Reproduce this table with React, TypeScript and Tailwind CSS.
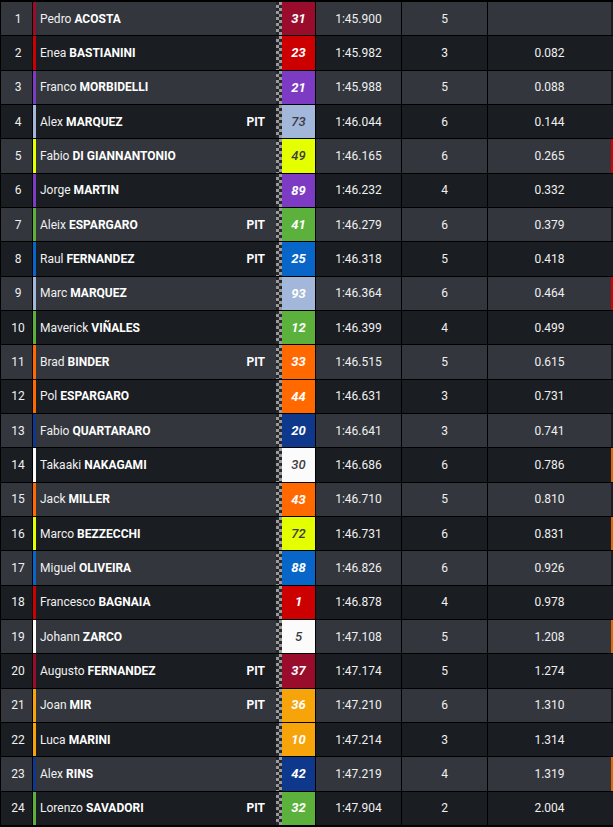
import React from "react";

type Row = {
  pos: number;
  first: string;
  last: string;
  pit?: boolean;
  num: string;
  color: string;
  dark?: boolean;
  time: string;
  laps: string;
  gap: string;
  edge?: string;
};

const MAROON = "bg-[#990c2c]";
const RED = "bg-[#cc0000]";
const PURPLE = "bg-[#7d3bc3]";
const LBLUE = "bg-[#a2b7d9]";
const LIME = "bg-[#e3ff00]";
const GREEN = "bg-[#5bb13c]";
const BLUE = "bg-[#0866c9]";
const ORANGE = "bg-[#ff6900]";
const DBLUE = "bg-[#0e388b]";
const WHITE = "bg-[#fbfbfb]";
const GOLD = "bg-[#f7a30a]";

const rows: Row[] = [
  { pos: 1, first: "Pedro", last: "ACOSTA", num: "31", color: MAROON, time: "1:45.900", laps: "5", gap: "" },
  { pos: 2, first: "Enea", last: "BASTIANINI", num: "23", color: RED, time: "1:45.982", laps: "3", gap: "0.082" },
  { pos: 3, first: "Franco", last: "MORBIDELLI", num: "21", color: PURPLE, time: "1:45.988", laps: "5", gap: "0.088" },
  { pos: 4, first: "Alex", last: "MARQUEZ", pit: true, num: "73", color: LBLUE, dark: true, time: "1:46.044", laps: "6", gap: "0.144" },
  { pos: 5, first: "Fabio", last: "DI GIANNANTONIO", num: "49", color: LIME, dark: true, time: "1:46.165", laps: "6", gap: "0.265", edge: "bg-[#d60000]" },
  { pos: 6, first: "Jorge", last: "MARTIN", num: "89", color: PURPLE, time: "1:46.232", laps: "4", gap: "0.332" },
  { pos: 7, first: "Aleix", last: "ESPARGARO", pit: true, num: "41", color: GREEN, time: "1:46.279", laps: "6", gap: "0.379" },
  { pos: 8, first: "Raul", last: "FERNANDEZ", pit: true, num: "25", color: BLUE, time: "1:46.318", laps: "5", gap: "0.418" },
  { pos: 9, first: "Marc", last: "MARQUEZ", num: "93", color: LBLUE, time: "1:46.364", laps: "6", gap: "0.464", edge: "bg-[#d60000]" },
  { pos: 10, first: "Maverick", last: "VIÑALES", num: "12", color: GREEN, time: "1:46.399", laps: "4", gap: "0.499" },
  { pos: 11, first: "Brad", last: "BINDER", pit: true, num: "33", color: ORANGE, time: "1:46.515", laps: "5", gap: "0.615" },
  { pos: 12, first: "Pol", last: "ESPARGARO", num: "44", color: ORANGE, time: "1:46.631", laps: "3", gap: "0.731" },
  { pos: 13, first: "Fabio", last: "QUARTARARO", num: "20", color: DBLUE, time: "1:46.641", laps: "3", gap: "0.741" },
  { pos: 14, first: "Takaaki", last: "NAKAGAMI", num: "30", color: WHITE, dark: true, time: "1:46.686", laps: "6", gap: "0.786", edge: "bg-[#e06a00]" },
  { pos: 15, first: "Jack", last: "MILLER", num: "43", color: ORANGE, time: "1:46.710", laps: "5", gap: "0.810" },
  { pos: 16, first: "Marco", last: "BEZZECCHI", num: "72", color: LIME, dark: true, time: "1:46.731", laps: "6", gap: "0.831", edge: "bg-[#e06a00]" },
  { pos: 17, first: "Miguel", last: "OLIVEIRA", num: "88", color: BLUE, time: "1:46.826", laps: "6", gap: "0.926" },
  { pos: 18, first: "Francesco", last: "BAGNAIA", num: "1", color: RED, time: "1:46.878", laps: "4", gap: "0.978" },
  { pos: 19, first: "Johann", last: "ZARCO", num: "5", color: WHITE, dark: true, time: "1:47.108", laps: "5", gap: "1.208", edge: "bg-[#e06a00]" },
  { pos: 20, first: "Augusto", last: "FERNANDEZ", pit: true, num: "37", color: MAROON, time: "1:47.174", laps: "5", gap: "1.274" },
  { pos: 21, first: "Joan", last: "MIR", pit: true, num: "36", color: GOLD, time: "1:47.210", laps: "6", gap: "1.310" },
  { pos: 22, first: "Luca", last: "MARINI", num: "10", color: GOLD, time: "1:47.214", laps: "3", gap: "1.314" },
  { pos: 23, first: "Alex", last: "RINS", num: "42", color: DBLUE, time: "1:47.219", laps: "4", gap: "1.319", edge: "bg-[#e06a00]" },
  { pos: 24, first: "Lorenzo", last: "SAVADORI", pit: true, num: "32", color: GREEN, time: "1:47.904", laps: "2", gap: "2.004" },
];

export default function App() {
  return (
    <div
      className="w-[613px] h-[827px] bg-black pt-[2px] flex flex-col gap-px overflow-hidden text-[12px] text-[#f0f0f0]"
      style={{ fontFamily: "Roboto, 'Noto Sans', sans-serif" }}
    >
      {rows.map((r) => {
        const bg = r.pos % 2 === 1 ? "bg-[#33363d]" : "bg-[#1a1d21]";
        return (
          <div key={r.pos} className="h-[33.33px] flex shrink-0 pl-px">
            <div className={`w-[31px] ${bg} flex items-center justify-center pl-[3px]`}>{r.pos}</div>
            <div className="w-px" />
            <div className={`w-[3px] ${r.color}`} />
            <div className={`w-[240px] ${bg} flex items-center justify-between pl-[4px] pr-[11px]`}>
              <span className="whitespace-nowrap">
                {r.first} <span className="font-bold text-white">{r.last}</span>
              </span>
              {r.pit && <span className="font-bold text-white">PIT</span>}
            </div>
            <div className="w-[6px] bg-[repeating-conic-gradient(#9b9b9b_0_25%,#26282c_0_50%)] bg-[length:6px_6px]" />
            <div
              className={`w-[33px] ${r.color} flex items-center justify-center italic text-[13px] ${
                r.dark ? "text-[#3c3c44] font-medium" : "text-white font-bold"
              }`}
            >
              {r.num}
            </div>
            <div className="w-px" />
            <div className={`w-[85px] ${bg} flex items-center justify-center`}>{r.time}</div>
            <div className="w-px" />
            <div className={`w-[85px] ${bg} flex items-center justify-center`}>{r.laps}</div>
            <div className="w-px" />
            <div className={`w-[123px] ${bg} flex items-center justify-center`}>{r.gap}</div>
            <div className={`w-[2px] ${r.edge ?? "bg-[#1a1d21]"}`} />
          </div>
        );
      })}
    </div>
  );
}
